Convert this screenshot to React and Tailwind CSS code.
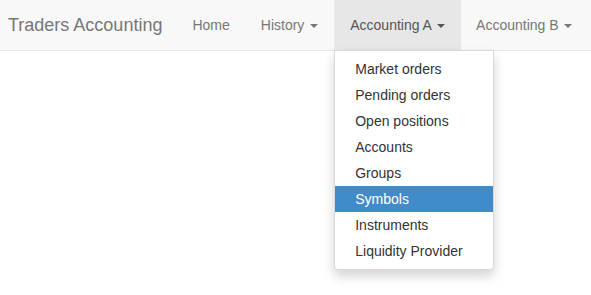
import React from "react";

const menuItems = [
  "Market orders",
  "Pending orders",
  "Open positions",
  "Accounts",
  "Groups",
  "Symbols",
  "Instruments",
  "Liquidity Provider",
];

function Caret() {
  return (
    <span className="ml-[2px] inline-block h-0 w-0 border-x-[4px] border-t-[4px] border-x-transparent border-t-current align-middle" />
  );
}

function App() {
  return (
    <div className="min-h-[295px] bg-white font-['Liberation_Sans',Arial,sans-serif] text-[14px] leading-[20px]">
      {/* navbar */}
      <div className="flex h-[51px] border-b border-[#e7e7e7] bg-[#f8f8f8]">
        <a className="block h-[50px] pl-2 pr-[15px] py-[15px] text-[18px] leading-[20px] text-[#777]">
          Traders Accounting
        </a>
        <ul className="flex">
          <li>
            <a className="block px-[15px] py-[15px] text-[#777]">Home</a>
          </li>
          <li>
            <a className="block pl-[16px] pr-[16px] py-[15px] text-[#777]">
              History <Caret />
            </a>
          </li>
          <li className="relative">
            <a className="block h-[50px] bg-[#e7e7e7] px-[16px] py-[15px] text-[#555]">
              Accounting A <Caret />
            </a>
            {/* dropdown */}
            <ul className="absolute left-0 top-[50px] z-10 min-w-[160px] rounded-b-[4px] border border-black/15 bg-white py-[5px] shadow-[0_6px_12px_rgba(0,0,0,0.175)]">
              {menuItems.map((item) => (
                <li key={item}>
                  <a
                    className={`block whitespace-nowrap px-5 py-[3px] ${
                      item === "Symbols"
                        ? "bg-[#428bca] text-white"
                        : "text-[#333]"
                    }`}
                  >
                    {item}
                  </a>
                </li>
              ))}
            </ul>
          </li>
          <li>
            <a className="block px-[15px] py-[15px] text-[#777]">
              Accounting B <Caret />
            </a>
          </li>
        </ul>
      </div>
    </div>
  );
}

export default App;
